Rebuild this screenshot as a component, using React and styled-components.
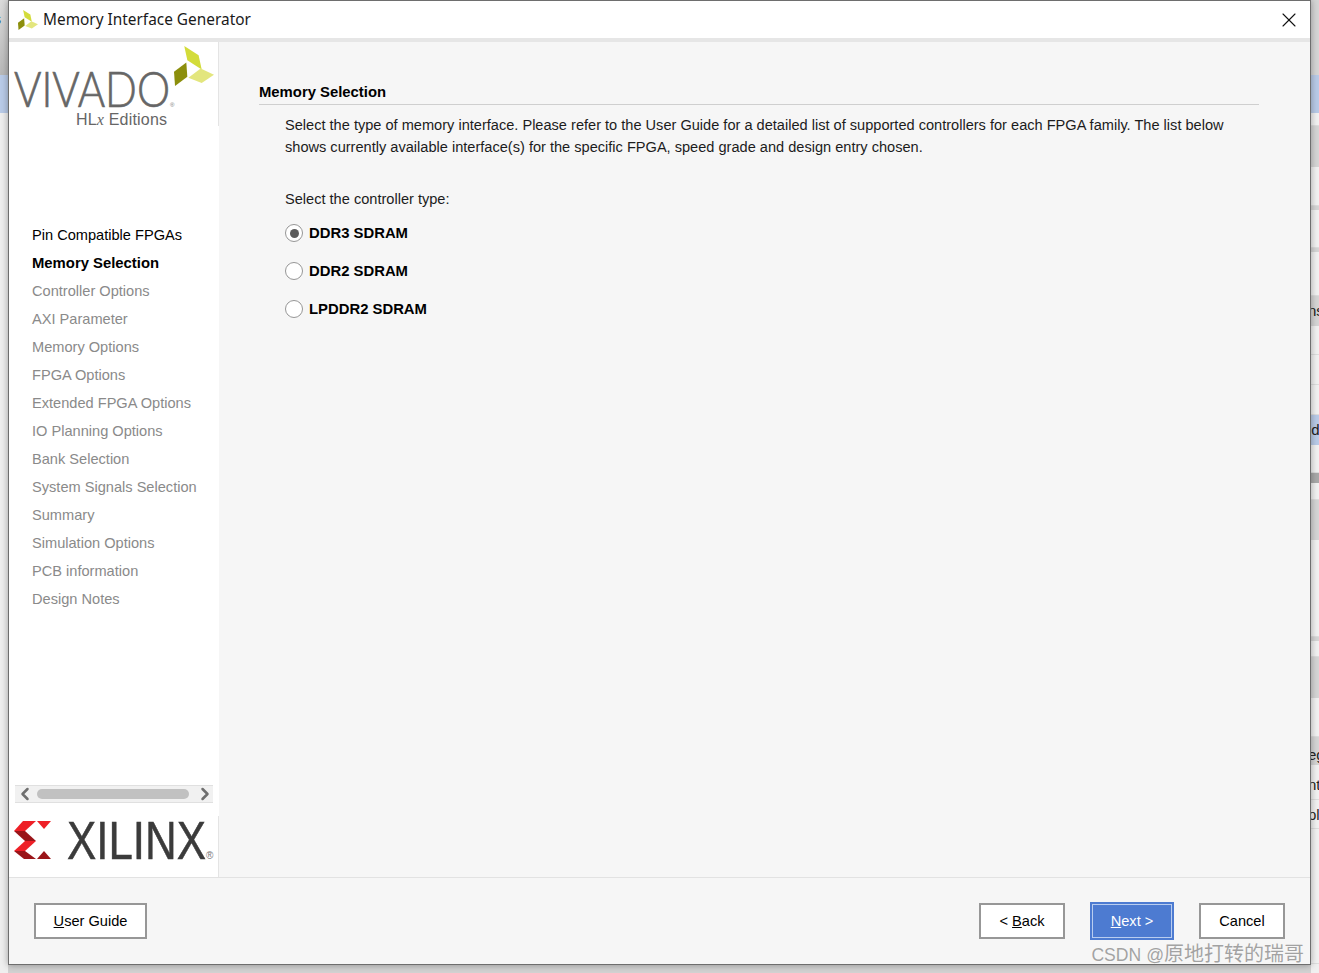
import React from "react";
import styled, { createGlobalStyle } from "styled-components";
import { ChevronLeft, ChevronRight, X } from "lucide-react";

const steps = [
  "Pin Compatible FPGAs",
  "Memory Selection",
  "Controller Options",
  "AXI Parameter",
  "Memory Options",
  "FPGA Options",
  "Extended FPGA Options",
  "IO Planning Options",
  "Bank Selection",
  "System Signals Selection",
  "Summary",
  "Simulation Options",
  "PCB information",
  "Design Notes",
];

const rightRows = [
  { h: 75, tone: "grey" },
  { h: 38, tone: "blue" },
  { h: 13, tone: "white" },
  { h: 41, tone: "grey" },
  { h: 39, tone: "white" },
  { h: 4, tone: "grey" },
  { h: 38, tone: "white" },
  { h: 4, tone: "grey" },
  { h: 44, tone: "white" },
  { h: 30, tone: "grey", text: "ns" },
  { h: 29, tone: "white" },
  { h: 30, tone: "white" },
  { h: 30, tone: "white" },
  { h: 30, tone: "blue", text: "ld" },
  { h: 28, tone: "white" },
  { h: 10, tone: "dark" },
  { h: 17, tone: "white" },
  { h: 40, tone: "grey" },
  { h: 97, tone: "white" },
  { h: 4, tone: "grey" },
  { h: 16, tone: "white" },
  { h: 41, tone: "grey" },
  { h: 39, tone: "white" },
  { h: 28, tone: "grey", text: "eg", drop: 4 },
  { h: 35, tone: "white", text: "nt", drop: 2 },
  { h: 29, tone: "white", text: "pl" },
  { h: 135, tone: "white" },
];

const rowColors = {
  grey: "#d6d6d6",
  blue: "#b9cbe8",
  white: "#f2f2f2",
  dark: "#a9a9a9",
};

const GlobalStyle = createGlobalStyle`
  html, body {
    margin: 0;
    padding: 0;
    overflow: hidden;
    background: #f0f0f0;
  }
  * {
    box-sizing: border-box;
  }
`;

const Desktop = styled.div`
  display: flex;
  width: 1319px;
  height: 973px;
  overflow: hidden;
  font-family: "Liberation Sans", Arial, sans-serif;
`;

const LeftStrip = styled.div`
  display: flex;
  flex-direction: column;
  width: 8px;
  flex: none;
`;

const RightStrip = styled.div`
  display: flex;
  flex-direction: column;
  width: 8px;
  flex: none;
  overflow: hidden;
`;

const StripRow = styled.div`
  flex: none;
  height: ${(p) => p.$h}px;
  padding-top: ${(p) => p.$drop || 0}px;
  background: ${(p) => rowColors[p.$tone]};
  border-bottom: ${(p) => (p.$tone === "white" ? "1px solid #dedede" : "0")};
  font-size: 15px;
  line-height: ${(p) => p.$h}px;
  text-indent: -3px;
  color: #222;
  white-space: nowrap;
  overflow: hidden;
`;

const LeftTitle = styled.div`
  flex: none;
  height: 75px;
  padding-top: 11px;
  background: linear-gradient(#dcdcdc, #b8b8b8);
  color: #24507c;
  font-size: 14px;
  text-indent: -6px;
  overflow: hidden;
`;

const LeftBlue = styled.div`
  flex: none;
  height: 38px;
  background: #b9cbe8;
`;

const LeftRest = styled.div`
  flex: 1;
  background: #efefef;
`;

const Center = styled.div`
  display: flex;
  flex-direction: column;
  width: 1303px;
  flex: none;
`;

const Window = styled.div`
  position: relative;
  z-index: 1;
  display: flex;
  flex-direction: column;
  height: 965px;
  flex: none;
  background: #f6f6f6;
  border: 1px solid #6e6e6e;
  box-shadow: 0 0 7px rgba(0, 0, 0, 0.35);
`;

const BottomStrip = styled.div`
  flex: 1;
  background: #d2d2d2;
`;

const TitleBar = styled.div`
  display: flex;
  align-items: center;
  flex: none;
  height: 37px;
  padding: 0 9px 0 9px;
  background: #fff;
`;

const WindowTitle = styled.span`
  margin-left: 5px;
  font-family: "Noto Sans", "Open Sans", sans-serif;
  font-size: 15.4px;
  color: #1a1a1a;
`;

const CloseButton = styled.span`
  display: flex;
  margin-left: auto;
  color: #111;
`;

const TitleRule = styled.div`
  flex: none;
  height: 4px;
  background: #e6e6e6;
`;

const Body = styled.div`
  display: flex;
  flex: 1;
  min-height: 0;
`;

const Sidebar = styled.aside`
  display: flex;
  flex-direction: column;
  flex: none;
  width: 210px;
  background: #fff;
`;

const LogoBox = styled.div`
  flex: none;
  height: 84px;
  border-right: 1px solid #e4e4e4;

  svg {
    display: block;
    overflow: visible;
  }
`;

const StepList = styled.ul`
  flex: 1;
  margin: 0;
  padding: 95px 0 0 23px;
  list-style: none;
`;

const Step = styled.li`
  height: 28px;
  font-size: ${(p) => (p.$state === "current" ? 14.85 : 14.6)}px;
  line-height: 28px;
  white-space: nowrap;
  font-weight: ${(p) => (p.$state === "current" ? 700 : 400)};
  color: ${(p) => (p.$state === "todo" ? "#8a8a8a" : "#000")};
`;

const ScrollTrack = styled.div`
  display: flex;
  align-items: center;
  flex: none;
  height: 18px;
  margin: 0 6px 13px 6px;
  background: #f1f1f1;
  border-top: 1px solid #e0e0e0;
  border-bottom: 1px solid #e0e0e0;
  color: #6f6f6f;

  svg {
    flex: none;
  }

  svg:last-child {
    margin-right: -2px;
  }
`;

const ScrollThumb = styled.div`
  flex: 1;
  height: 10px;
  margin: 0 6px 0 2px;
  border-radius: 5px;
  background: #c1c1c1;
`;

const BrandBox = styled.div`
  flex: none;
  height: 61px;
  border-right: 1px solid #e4e4e4;

  svg {
    display: block;
  }
`;

const Main = styled.main`
  flex: 1;
  min-width: 0;
  padding: 40px 51px 0 40px;
`;

const SectionTitle = styled.h2`
  margin: 0;
  height: 23px;
  font-size: 14.85px;
  line-height: 21px;
  font-weight: 700;
  color: #000;
  border-bottom: 1px solid #cfcfcf;
`;

const Section = styled.section`
  padding: 9px 0 0 26px;
`;

const Intro = styled.p`
  margin: 0;
  font-size: 14.59px;
  line-height: 22px;
  color: #1c1c1c;
`;

const Prompt = styled.p`
  margin: 30px 0 0;
  font-size: 14.59px;
  line-height: 22px;
  color: #1c1c1c;
`;

const RadioGroup = styled.div`
  display: flex;
  flex-direction: column;
  gap: 18px;
  margin-top: 13px;
`;

const RadioRow = styled.label`
  display: flex;
  align-items: center;
  height: 20px;
  font-size: 14.85px;
  font-weight: 700;
  color: #000;
`;

const RadioDot = styled.span`
  display: flex;
  align-items: center;
  justify-content: center;
  width: 18px;
  height: 18px;
  margin-right: 6px;
  border: 1.5px solid #969696;
  border-radius: 50%;
  background: #fff;

  &::after {
    content: "";
    display: ${(p) => (p.$checked ? "block" : "none")};
    width: 9px;
    height: 9px;
    border-radius: 50%;
    background: #5c5c5c;
  }
`;

const Footer = styled.footer`
  display: flex;
  align-items: center;
  flex: none;
  height: 87px;
  padding: 0 25px;
  border-top: 1px solid #e2e2e2;
  background: #f6f6f6;
`;

const DialogButton = styled.button`
  width: ${(p) => p.$w}px;
  height: 36px;
  margin-left: ${(p) => p.$gap || 0}px;
  padding: 0;
  border: 2px solid #979797;
  background: #fff;
  color: #000;
  font-family: "Liberation Sans", Arial, sans-serif;
  font-size: 14.6px;
`;

const PrimaryButton = styled(DialogButton)`
  height: 38px;
  border: 2px solid #4d7bd1;
  outline: 1px solid #b9cdf0;
  outline-offset: -3px;
  background: #4d7bd1;
  color: #fff;
`;

const Spacer = styled.div`
  flex: 1;
`;

const Watermark = styled.span`
  position: absolute;
  right: 6px;
  bottom: -3px;
  font-family: "Noto Sans CJK SC", sans-serif;
  font-size: 20px;
  line-height: 24px;
  color: rgba(130, 130, 130, 0.72);
  white-space: nowrap;
`;

const WatermarkLatin = styled.span`
  font-family: "Liberation Sans", sans-serif;
  font-size: 17.6px;
`;

function LeafMark({ x, y, size }) {
  return (
    <svg x={x} y={y} width={size} height={size} viewBox="0 0 39 39">
      <polygon points="10,0 24,9 27,23 13,14" fill="#d3dc3a" />
      <polygon points="0,25 12,16 13,30 1,39" fill="#8c8f0c" />
      <polygon points="14,31 26,22 39,28 27,36" fill="#e3e67e" />
    </svg>
  );
}

function VivadoLogo() {
  return (
    <svg width="209" height="84" viewBox="0 0 209 84">
      <LeafMark x={165} y={4} size={40} />
      <text
        x="5"
        y="65"
        fontFamily="Lato, 'Liberation Sans', sans-serif"
        fontWeight="300"
        fontSize="50"
        fill="#666"
        stroke="#666"
        strokeWidth="0.7"
        textLength="156"
        lengthAdjust="spacingAndGlyphs"
      >
        VIVADO
      </text>
      <text x="161" y="65" fontFamily="Liberation Sans" fontSize="6" fill="#777">
        ®
      </text>
      <text
        x="67"
        y="83"
        fontFamily="'Liberation Sans', sans-serif"
        fontSize="16"
        fill="#666"
        textLength="91"
        lengthAdjust="spacing"
      >
        HL<tspan fontFamily="'Liberation Serif', serif" fontStyle="italic">x</tspan> Editions
      </text>
    </svg>
  );
}

function XilinxLogo() {
  return (
    <svg width="209" height="61" viewBox="0 0 209 61">
      <polygon points="14,5 27,5 16,15 5,15" fill="#ee2027" />
      <polygon points="5,15 16,15 27,25 16,25" fill="#9a1519" />
      <polygon points="16,25 27,25 16,35 5,35" fill="#ee2027" />
      <polygon points="5,35 16,35 27,43 15,43" fill="#9a1519" />
      <polygon points="28,5 42,5 35,13" fill="#ee2027" />
      <polygon points="28,43 42,43 35,35" fill="#9a1519" />
      <text
        x="58"
        y="43"
        fontFamily="'Liberation Sans', sans-serif"
        fontSize="53"
        fill="#3b3b3b"
        stroke="#3b3b3b"
        strokeWidth="0.5"
        textLength="139"
        lengthAdjust="spacingAndGlyphs"
      >
        XILINX
      </text>
      <text x="197" y="43" fontFamily="Liberation Sans" fontSize="10" fill="#777">
        ®
      </text>
    </svg>
  );
}

export default function App() {
  return (
    <>
      <GlobalStyle />
      <Desktop>
        <LeftStrip>
          <LeftTitle>s</LeftTitle>
          <LeftBlue />
          <LeftRest />
        </LeftStrip>
        <Center>
          <Window>
            <TitleBar>
              <LeafMark size={20} />
              <WindowTitle>Memory Interface Generator</WindowTitle>
              <CloseButton>
                <X size={24} strokeWidth={1.1} />
              </CloseButton>
            </TitleBar>
            <TitleRule />
            <Body>
              <Sidebar>
                <LogoBox>
                  <VivadoLogo />
                </LogoBox>
                <StepList>
                  {steps.map((s, i) => (
                    <Step key={s} $state={i === 0 ? "done" : i === 1 ? "current" : "todo"}>
                      {s}
                    </Step>
                  ))}
                </StepList>
                <ScrollTrack>
                  <ChevronLeft size={20} strokeWidth={3} />
                  <ScrollThumb />
                  <ChevronRight size={20} strokeWidth={3} />
                </ScrollTrack>
                <BrandBox>
                  <XilinxLogo />
                </BrandBox>
              </Sidebar>
              <Main>
                <SectionTitle>Memory Selection</SectionTitle>
                <Section>
                  <Intro>
                    Select the type of memory interface. Please refer to the User Guide for a detailed list of
                    supported controllers for each FPGA family. The list below
                    <br />
                    shows currently available interface(s) for the specific FPGA, speed grade and design entry chosen.
                  </Intro>
                  <Prompt>Select the controller type:</Prompt>
                  <RadioGroup>
                    <RadioRow>
                      <RadioDot $checked />
                      DDR3 SDRAM
                    </RadioRow>
                    <RadioRow>
                      <RadioDot />
                      DDR2 SDRAM
                    </RadioRow>
                    <RadioRow>
                      <RadioDot />
                      LPDDR2 SDRAM
                    </RadioRow>
                  </RadioGroup>
                </Section>
              </Main>
            </Body>
            <Footer>
              <DialogButton $w={113}>
                <u>U</u>ser Guide
              </DialogButton>
              <Spacer />
              <DialogButton $w={86}>
                &lt; <u>B</u>ack
              </DialogButton>
              <PrimaryButton $w={84} $gap={25}>
                <u>N</u>ext &gt;
              </PrimaryButton>
              <DialogButton $w={86} $gap={25}>
                Cancel
              </DialogButton>
            </Footer>
            <Watermark>
              <WatermarkLatin>CSDN @</WatermarkLatin>原地打转的瑞哥
            </Watermark>
          </Window>
          <BottomStrip />
        </Center>
        <RightStrip>
          {rightRows.map((r, i) => (
            <StripRow key={i} $h={r.h} $tone={r.tone} $drop={r.drop}>
              {r.text}
            </StripRow>
          ))}
        </RightStrip>
      </Desktop>
    </>
  );
}
